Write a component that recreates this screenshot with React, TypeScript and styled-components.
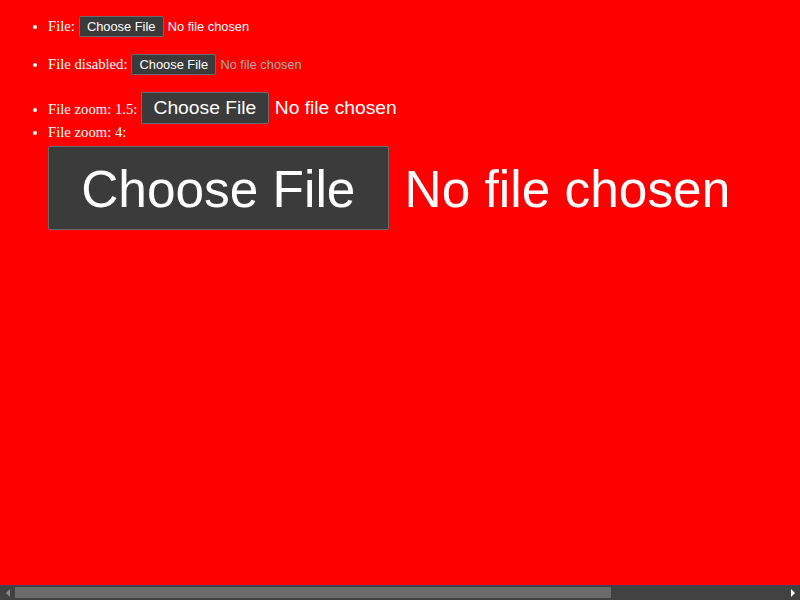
import React from 'react'
import styled, { createGlobalStyle } from 'styled-components'

const GlobalStyle = createGlobalStyle`
  html, body {
    background: #ff0000;
  }
  body {
    margin: 0;
    padding: 8px;
    color: #ffffff;
    font-family: 'Liberation Serif', 'Times New Roman', serif;
    font-size: 14.7px;
    overflow: hidden;
  }
`

const List = styled.ul`
  margin: 8px 0 0;
  padding-left: 40px;
`

const Item = styled.li<{ $gap?: number }>`
  margin-bottom: ${({ $gap }) => $gap ?? 0}px;
`

// native-looking file picker; $scale mimics css zoom but keeps 1px strokes
const Picker = styled.span<{ $scale: number; $drop?: number }>`
  display: inline-flex;
  align-items: baseline;
  margin-top: ${({ $drop }) => $drop ?? 0}px;
  font-family: 'Liberation Sans', Arial, sans-serif;
  font-size: ${({ $scale }) => 12.85 * $scale}px;
  white-space: nowrap;
`

const ChooseButton = styled.span<{ $scale: number }>`
  display: inline-block;
  line-height: ${({ $scale }) => 17 * $scale}px;
  padding: ${({ $scale }) =>
    `${2.25 * $scale - 1}px ${8.3 * $scale - 1}px ${1.75 * $scale - 1}px`};
  border: 1px solid #6b6b6b;
  border-radius: 2px;
  background: #3b3b3b;
  color: #ffffff;
  margin-right: ${({ $scale }) => 4 * $scale}px;
`

const Status = styled.span<{ $disabled?: boolean }>`
  color: ${({ $disabled }) => ($disabled ? '#aaaaaa' : '#ffffff')};
`

const ScrollBar = styled.div`
  position: fixed;
  left: 0;
  right: 0;
  bottom: 0;
  height: 15px;
  background: #424242;
  display: flex;
  align-items: center;
`

const Arrow = styled.div<{ $dir: 'left' | 'right'; $active?: boolean }>`
  width: 15px;
  height: 15px;
  display: flex;
  align-items: center;
  justify-content: center;

  &::before {
    content: '';
    border-top: 4px solid transparent;
    border-bottom: 4px solid transparent;
    ${({ $dir, $active }) =>
      $dir === 'left'
        ? `border-right: 4px solid ${$active ? '#ffffff' : '#8a8a8a'};`
        : `border-left: 4px solid ${$active ? '#ffffff' : '#8a8a8a'};`}
  }
`

const Track = styled.div`
  flex: 1;
  height: 11px;
  display: flex;
`

const Thumb = styled.div`
  width: 596px;
  height: 100%;
  background: #6b6b6b;
`

interface FileFieldProps {
  scale?: number
  drop?: number
  disabled?: boolean
}

function FileField({ scale = 1, drop, disabled }: FileFieldProps) {
  return (
    <Picker $scale={scale} $drop={drop}>
      <ChooseButton $scale={scale}>Choose File</ChooseButton>
      <Status $disabled={disabled}>No file chosen</Status>
    </Picker>
  )
}

export default function App() {
  return (
    <>
      <GlobalStyle />
      <List>
        <Item $gap={17}>
          File: <FileField />
        </Item>
        <Item $gap={17}>
          File disabled: <FileField disabled />
        </Item>
        <Item>
          File zoom: 1.5: <FileField scale={1.5} />
        </Item>
        <Item>
          File zoom: 4: <FileField scale={4} drop={5} />
        </Item>
      </List>
      <ScrollBar>
        <Arrow $dir="left" />
        <Track>
          <Thumb />
        </Track>
        <Arrow $dir="right" $active />
      </ScrollBar>
    </>
  )
}
